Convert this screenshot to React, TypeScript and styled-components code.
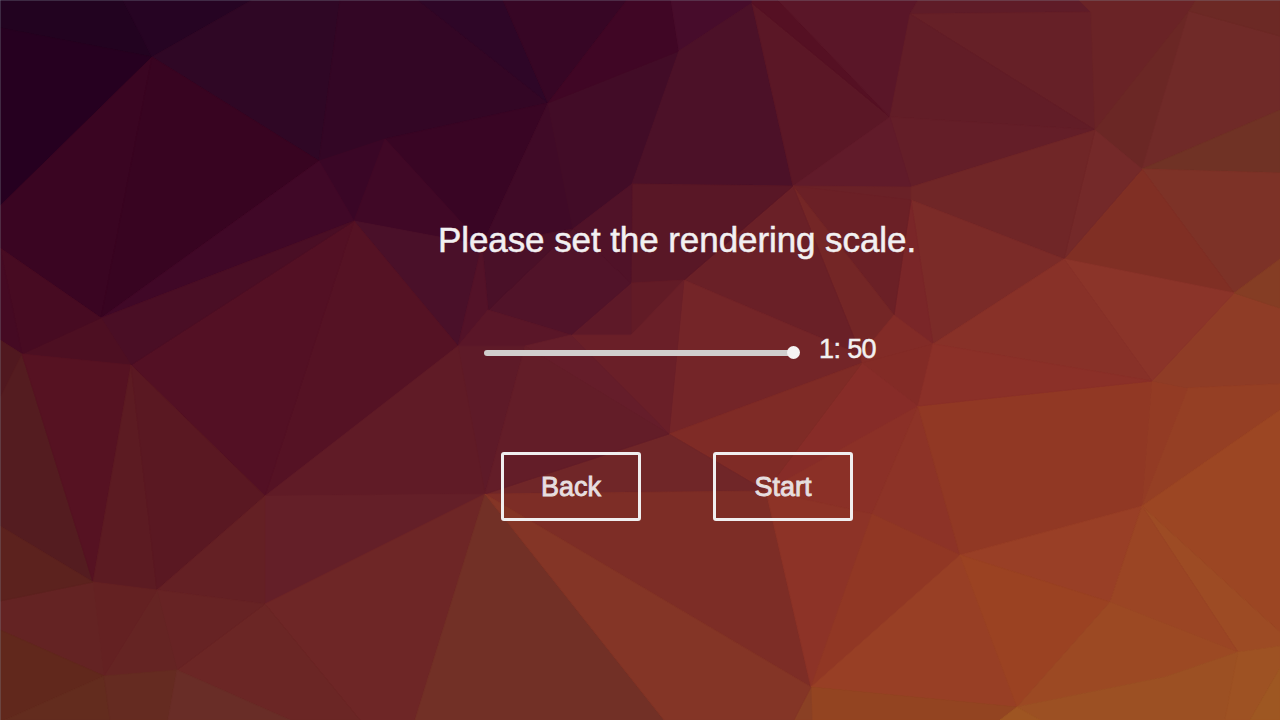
import React from 'react';
import styled, { createGlobalStyle } from 'styled-components';

const GlobalStyle = createGlobalStyle`
  html, body { margin: 0; padding: 0; }
  body { background: #5a1826; overflow: hidden; }
`;

const Screen = styled.main`
  position: relative;
  box-sizing: border-box;
  width: 1280px;
  height: 720px;
  overflow: hidden;
  color: #f2f0f1;
  font-family: 'Liberation Sans', Arial, Helvetica, sans-serif;
`;

const Backdrop = styled.svg`
  position: absolute;
  inset: 0;
  display: block;
`;

const Dialog = styled.section`
  position: relative;
  display: flex;
  flex-direction: column;
  align-items: center;
  width: 480px;
  margin-left: 437px;
  padding-top: 220px;
`;

const Title = styled.h1`
  margin: 0;
  font-size: 35px;
  line-height: 40px;
  font-weight: 400;
  letter-spacing: -0.08px;
  white-space: nowrap;
  -webkit-text-stroke: 0.5px #f2f0f1;
`;

const ScaleRow = styled.div`
  display: flex;
  align-items: center;
  gap: 19px;
  height: 32px;
  margin-top: 73px;
  margin-left: 6px;
`;

const Slider = styled.div`
  display: flex;
  align-items: center;
  width: 316px;
  height: 13px;
  margin-top: 7px;
`;

const Track = styled.div`
  flex: 1;
  height: 6px;
  border-radius: 3px;
  background: #d0cecd;
`;

const Thumb = styled.div`
  width: 13px;
  height: 13px;
  margin-left: -9px;
  border-radius: 50%;
  background: #f5f3f3;
`;

const ScaleValue = styled.output`
  font-size: 27px;
  line-height: 32px;
  letter-spacing: -0.6px;
  white-space: pre;
  -webkit-text-stroke: 0.5px #f2f0f1;
`;

const Actions = styled.div`
  display: flex;
  gap: 72px;
  margin-top: 87px;
`;

const Button = styled.button`
  box-sizing: border-box;
  width: 140px;
  height: 69px;
  padding: 0;
  border: 3px solid #f0eeef;
  border-radius: 3px;
  background: transparent;
  color: #e6dedf;
  font: 400 27px/32px 'Liberation Sans', Arial, sans-serif;
  -webkit-text-stroke: 0.9px #e6dedf;
`;

const facets: [string, string][] = [
  ['#220320', '0,0 123,0 152,57 0,28'],
  ['#260020', '0,28 152,57 0,206'],
  ['#260423', '123,0 252,0 152,57'],
  ['#2f0725', '252,0 340,0 319,161 152,57'],
  ['#330625', '340,0 418,0 548,103 385,139 319,161'],
  ['#2e0627', '418,0 503,0 548,103'],
  ['#370625', '503,0 627,0 548,103'],
  ['#3a0522', '0,206 152,57 101,318 0,248'],
  ['#380421', '152,57 319,161 101,318'],
  ['#3a0626', '319,161 385,139 354,221'],
  ['#400827', '319,161 354,221 101,318'],
  ['#390524', '385,139 548,103 482,245'],
  ['#400826', '385,139 482,245 354,221'],
  ['#4a1029', '354,221 482,245 458,346'],
  ['#400a27', '548,103 573,229 482,245'],
  ['#420c27', '548,103 679,51 632,184 573,229'],
  ['#400625', '627,0 671,0 679,51 548,103'],
  ['#470c2b', '671,0 756,0 752,3 679,51'],
  ['#4c1128', '679,51 752,3 793,186 632,184'],
  ['#5b1726', '752,3 890,117 793,186'],
  ['#551023', '752,0 778,0 890,117 752,3'],
  ['#5a1628', '778,0 918,0 910,14 890,117'],
  ['#5f1c28', '918,0 1079,0 1091,12 910,14'],
  ['#662027', '910,14 1091,12 1095,130'],
  ['#621d27', '910,14 1095,130 890,117'],
  ['#641e28', '890,117 1095,130 911,187'],
  ['#611b2a', '890,117 911,187 793,186'],
  ['#6a2127', '793,186 911,187 911,200'],
  ['#6a2326', '1079,0 1196,0 1189,11 1095,130 1091,12'],
  ['#6b2725', '1189,11 1142,169 1095,130'],
  ['#702a28', '1189,11 1280,36 1280,110 1142,169'],
  ['#6c2925', '1196,0 1280,0 1280,36 1189,11'],
  ['#703225', '1142,169 1280,110 1280,173'],
  ['#7d3227', '1142,169 1280,173 1280,259 1234,293'],
  ['#802f24', '1142,169 1234,293 1064,259'],
  ['#742929', '1095,130 1142,169 1064,259'],
  ['#702627', '1095,130 1064,259 911,200 911,187'],
  ['#7b2b28', '911,200 1064,259 933,344'],
  ['#7a2628', '911,200 933,344 894,315'],
  ['#6b2026', '793,186 911,200 894,315'],
  ['#742626', '793,186 894,315 861,355'],
  ['#6a2027', '793,186 861,355 684,280'],
  ['#742528', '684,280 861,355 862,363 669,434'],
  ['#822b27', '894,315 933,344 862,363 861,355'],
  ['#832b26', '933,344 918,406 862,363'],
  ['#872c28', '862,363 918,406 766,491'],
  ['#7f2b26', '669,434 862,363 766,491'],
  ['#8b3027', '766,491 918,406 872,514'],
  ['#702628', '669,434 766,491 485,494'],
  ['#7d2d26', '485,494 766,491 811,687'],
  ['#8d3327', '766,491 872,514 811,687'],
  ['#8d3327', '918,406 960,555 872,514'],
  ['#913724', '872,514 960,555 811,687'],
  ['#983f25', '811,687 960,555 1017,707'],
  ['#934421', '811,687 1017,707 1000,720 794,720'],
  ['#8a4024', '811,687 812,720 794,720'],
  ['#913824', '918,406 1152,381 1142,506 960,555'],
  ['#993f26', '960,555 1142,506 1110,602'],
  ['#9b4222', '960,555 1110,602 1017,707'],
  ['#933b24', '1152,381 1188,388 1142,506'],
  ['#8f3c26', '1234,293 1280,308 1280,384 1188,388 1152,381'],
  ['#853d24', '1234,293 1280,259 1280,308'],
  ['#953f24', '1188,388 1280,384 1280,410 1142,506'],
  ['#9c4623', '1142,506 1280,410 1280,632'],
  ['#9d4b24', '1142,506 1280,632 1280,646 1238,652'],
  ['#9b4524', '1142,506 1238,652 1110,602'],
  ['#9c4923', '1110,602 1238,652 1165,677 1017,707'],
  ['#9c5023', '1017,707 1165,677 1238,652 1225,720 1040,720'],
  ['#9e5223', '1238,652 1280,646 1280,668 1250,720 1225,720'],
  ['#9e5722', '1280,668 1280,720 1250,720'],
  ['#9e5522', '1017,707 1040,720 1000,720'],
  ['#8b3429', '1064,259 1234,293 1152,381'],
  ['#883128', '1064,259 1152,381 933,344'],
  ['#8b3028', '933,344 1152,381 918,406'],
  ['#591726', '632,184 793,186 684,280 631,283'],
  ['#501228', '632,184 631,283 573,229'],
  ['#621b26', '631,283 684,280 631,335'],
  ['#5e1928', '631,283 631,335 571,335'],
  ['#6a1f28', '684,280 669,434 571,335 631,335'],
  ['#511329', '573,229 631,283 571,335 488,310'],
  ['#4a1028', '482,245 573,229 488,310'],
  ['#531228', '458,346 482,245 488,310'],
  ['#5a1628', '458,346 488,310 571,335 525,346'],
  ['#5e1a28', '458,346 525,346 485,494'],
  ['#651d2a', '525,346 571,335 669,434'],
  ['#631d28', '525,346 669,434 485,494'],
  ['#551224', '354,221 458,346 265,496'],
  ['#531024', '354,221 265,496 131,365'],
  ['#4a0e25', '101,318 354,221 131,365'],
  ['#4d0f22', '101,318 131,365 22,354'],
  ['#470b22', '0,248 101,318 22,354'],
  ['#450a23', '0,248 22,354 0,340'],
  ['#50181f', '0,340 22,354 0,398'],
  ['#541c20', '22,354 93,582 0,526 0,398'],
  ['#561222', '22,354 131,365 93,582'],
  ['#5c1b22', '131,365 157,590 93,582'],
  ['#5a1822', '131,365 265,496 157,590'],
  ['#601b26', '458,346 485,494 265,496'],
  ['#641f28', '265,496 485,494 265,604'],
  ['#642024', '265,496 265,604 157,590'],
  ['#6e2626', '485,494 415,720 360,720 265,604'],
  ['#6b2625', '265,604 360,720 290,720 177,670'],
  ['#672324', '157,590 265,604 177,670'],
  ['#652423', '157,590 177,670 104,676'],
  ['#642122', '93,582 157,590 104,676'],
  ['#642323', '0,601 93,582 104,676 0,630'],
  ['#5c221e', '0,526 93,582 0,601'],
  ['#61281c', '0,630 104,676 5,720 0,720'],
  ['#632c1e', '104,676 110,720 5,720'],
  ['#652b21', '104,676 177,670 168,720 110,720'],
  ['#692d27', '177,670 290,720 168,720'],
  ['#723026', '485,494 664,720 415,720'],
  ['#843526', '485,494 811,687 794,720 664,720'],
];

export default function App() {
  return (
    <Screen>
      <GlobalStyle />
      <Backdrop width="1280" height="720" viewBox="0 0 1280 720" aria-hidden="true">
        {facets.map(([fill, points], i) => (
          <polygon key={i} points={points} fill={fill} stroke={fill} strokeWidth="0.8" strokeLinejoin="round" />
        ))}
        <path d="M0 .5H1280M.5 0V720" stroke="#8994a0" strokeOpacity=".28" />
      </Backdrop>
      <Dialog>
        <Title>Please set the rendering scale.</Title>
        <ScaleRow>
          <Slider role="slider" aria-valuemin={1} aria-valuemax={50} aria-valuenow={50}>
            <Track />
            <Thumb />
          </Slider>
          <ScaleValue>1: 50</ScaleValue>
        </ScaleRow>
        <Actions>
          <Button>Back</Button>
          <Button>Start</Button>
        </Actions>
      </Dialog>
    </Screen>
  );
}
